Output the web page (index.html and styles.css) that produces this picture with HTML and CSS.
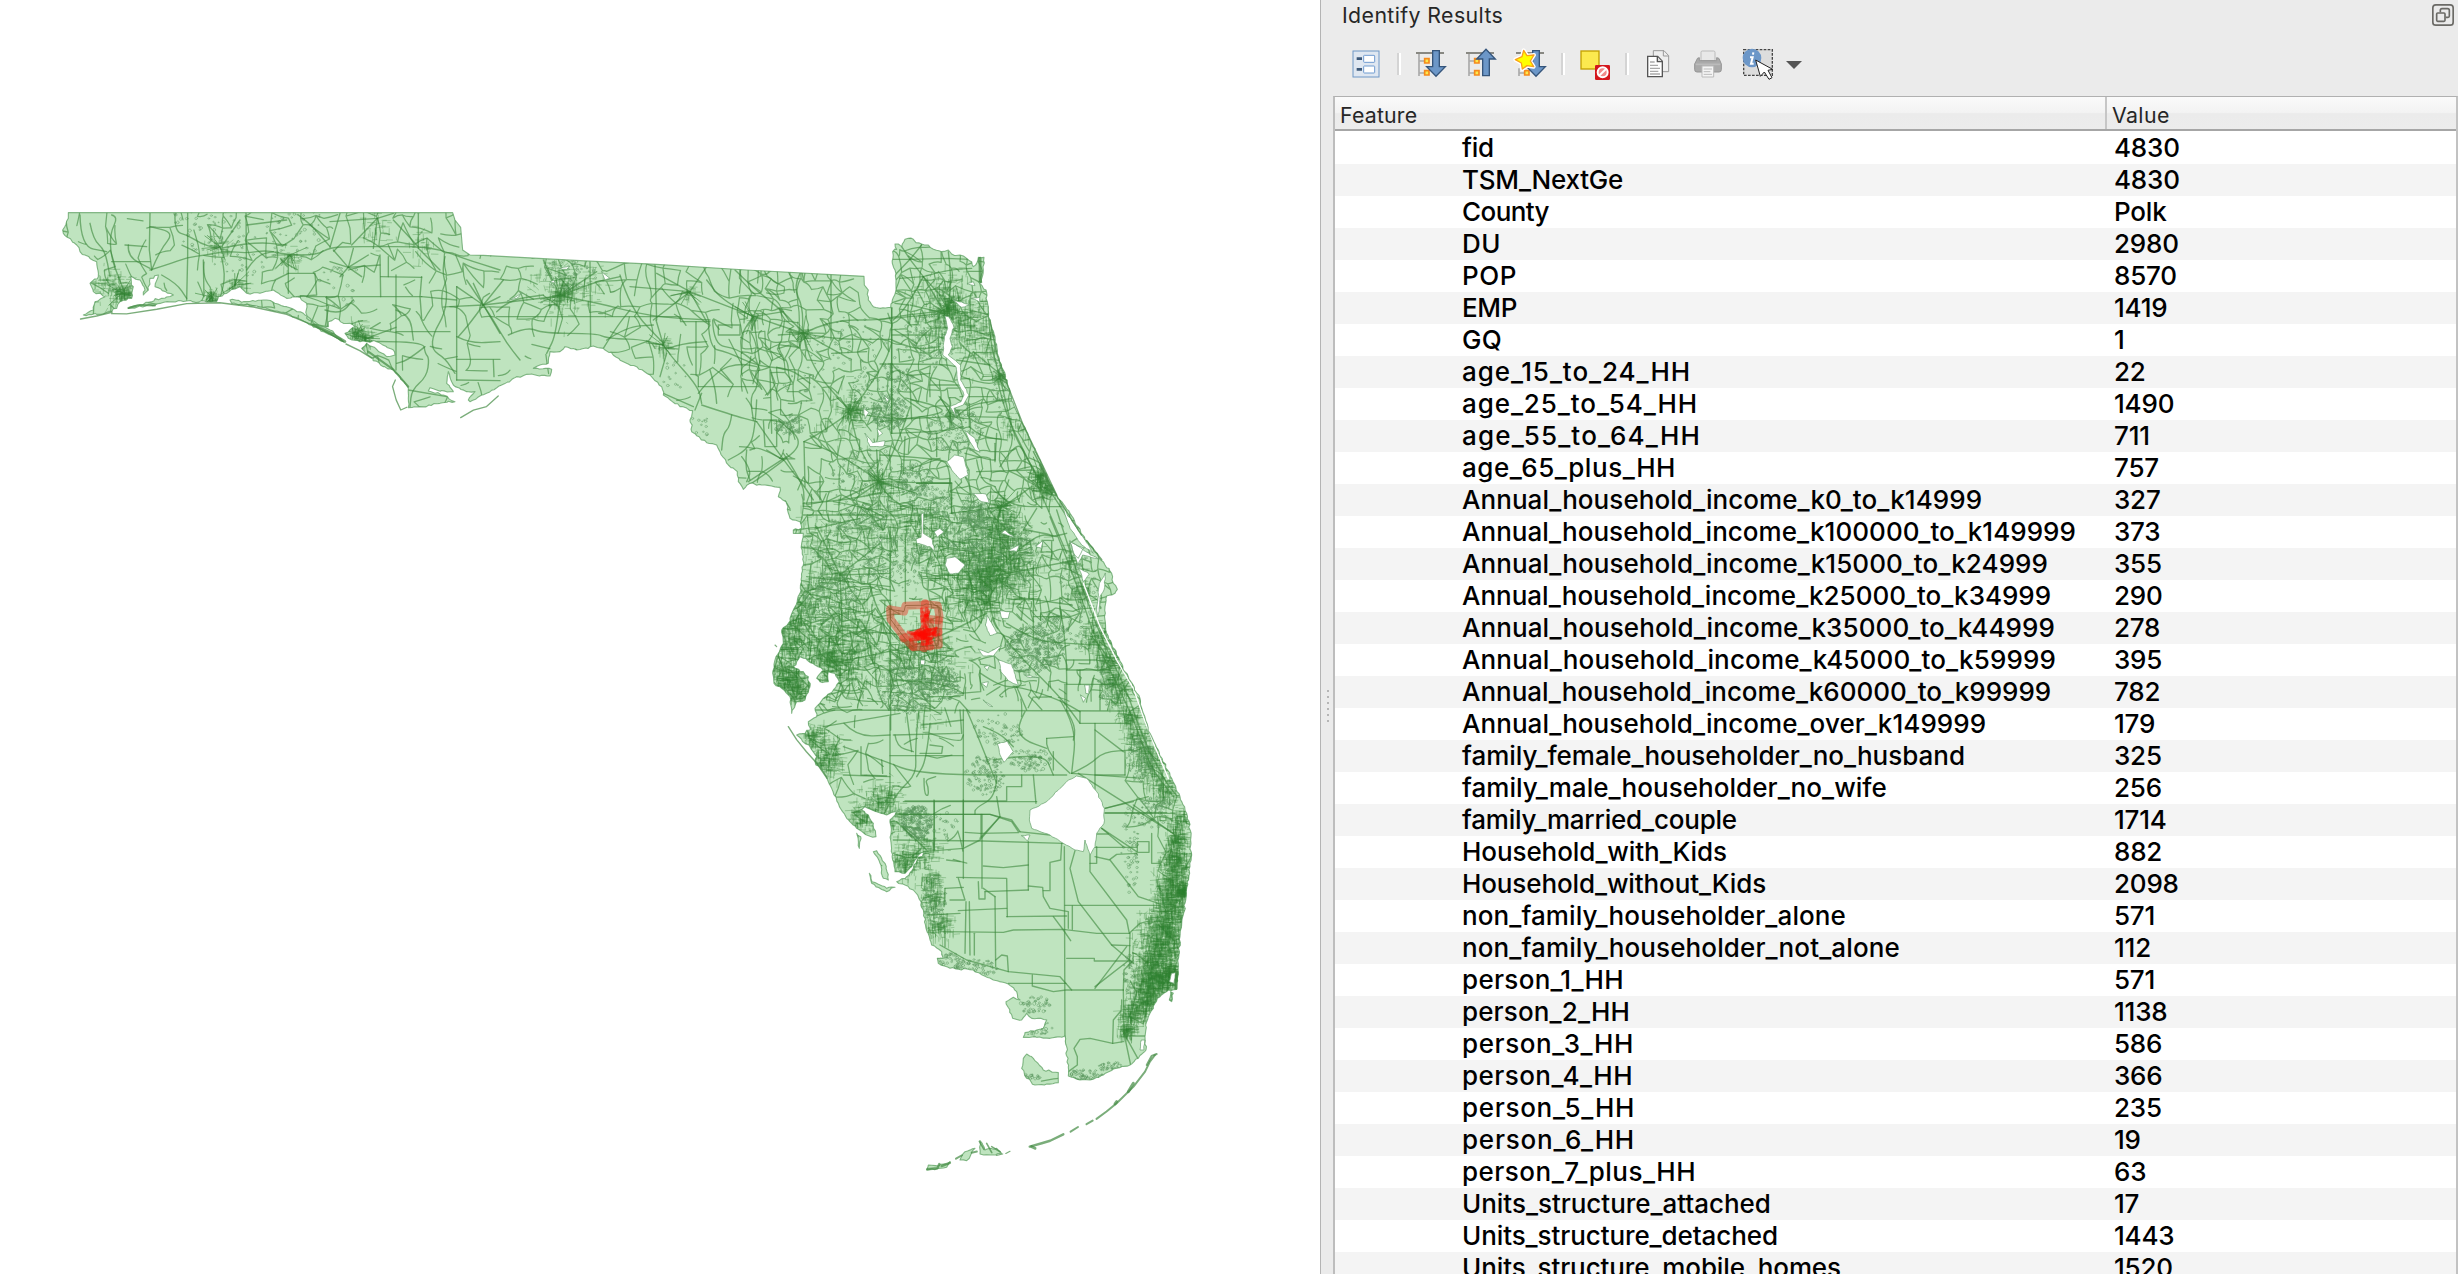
FILE: index.html
```
<!DOCTYPE html>
<html lang="en">
<head>
<meta charset="utf-8">
<title>Identify Results</title>
<link rel="stylesheet" href="styles.css">
</head>
<body>
<main class="app">
  <section class="map"><canvas id="map" width="1320" height="1274"></canvas></section>
  <aside class="dock">
    <div class="splitter"><i></i><i></i><i></i><i></i><i></i><i></i></div>
    <div class="panel">
      <header class="title"><span class="title-text">Identify Results</span>
        <svg class="float" width="22" height="22" viewBox="0 0 66 66" fill="none" stroke="#6b6a66" stroke-width="5"><rect x="2.500" y="2.500" width="61" height="61" rx="9"/><rect x="14" y="27" width="25" height="25" rx="3"/><path d="M25 25V19Q25 14 30 14H47Q52 14 52 19V36Q52 40 48 40H41"/></svg>
      </header>
      <div class="toolbar">
        <svg class="i1" width="30" height="32" viewBox="30 24 90 96"><rect x="39" y="33" width="78" height="78" fill="#dfe7f1" stroke="#6f97c6" stroke-width="3"/><g fill="#fff" stroke="#6f9bd0" stroke-width="3"><rect x="71" y="46" width="33" height="21" rx="2"/><rect x="71" y="78" width="33" height="21" rx="2"/></g><path d="M50 56h16M50 88h16" stroke="#3c5878" stroke-width="8"/></svg>
        <span class="sep s1"></span>
        <svg class="i2" width="32" height="32" viewBox="225 24 96 96"><path d="M228 39h84" stroke="#888882" stroke-width="6"/><path d="M237 42v66M237 63h15M237 99h15" stroke="#aaa" stroke-width="5" fill="none"/><path d="M254 56h13v13h-13zM254 92h13v13h-13z" fill="#fce94f" stroke="#f58a1c" stroke-width="5"/><path d="M278 32h20v48h18l-28 29-28-29h18z" fill="#6c97c8" stroke="#35557b" stroke-width="4"/></svg>
        <svg class="i3" width="32" height="32" viewBox="375 24 96 96"><path d="M378 39h84" stroke="#888882" stroke-width="6"/><path d="M387 42v66M387 63h15M387 99h15" stroke="#aaa" stroke-width="5" fill="none"/><path d="M404 56h13v13h-13zM404 92h13v13h-13z" fill="#fce94f" stroke="#f58a1c" stroke-width="5"/><path d="M428 107h20V57h18l-28-29-28 29h18z" fill="#6c97c8" stroke="#35557b" stroke-width="4"/></svg>
        <svg class="i4" width="34" height="32" viewBox="519 24 102 96"><path d="M528 39h84" stroke="#888882" stroke-width="6"/><path d="M537 85v23M537 99h15" stroke="#aaa" stroke-width="5"/><path d="M554 92h13v13h-13z" fill="#fce94f" stroke="#f58a1c" stroke-width="5"/><path d="M578 32h20v48h18l-28 29-28-29h18z" fill="#6c97c8" stroke="#35557b" stroke-width="4"/><path d="M551 31l10 16 21-2-11 18 10 17-20-3-14 10-3-18-18-10 20-9z" fill="#fff" stroke="#fff" stroke-width="12" stroke-linejoin="round"/><path d="M551 31l10 16 21-2-11 18 10 17-20-3-14 10-3-18-18-10 20-9z" fill="#ff0" stroke="#f9a11b" stroke-width="4" stroke-linejoin="round"/></svg>
        <span class="sep s2"></span>
        <svg class="i5" width="32" height="32" viewBox="57 24 96 96"><rect x="63" y="33" width="54" height="54" fill="#fce94f" stroke="#c4a000" stroke-width="4"/><rect x="105" y="75" width="45" height="45" rx="4" fill="#d4161c"/><circle cx="128" cy="97" r="15" fill="#f08a8a" stroke="#fff" stroke-width="6"/><path d="M138 87L117 107" stroke="#fff" stroke-width="6"/></svg>
        <span class="sep s3"></span>
        <svg class="i6" width="24" height="32" viewBox="258 24 72 96"><path d="M280 32h32l14 15v48h-46z" fill="#eee" stroke="#999" stroke-width="3"/><path d="M310 32v16h16" fill="none" stroke="#999" stroke-width="3"/><path d="M263 49h30l14 15v46h-44z" fill="#fff" stroke="#555" stroke-width="4"/><path d="M292 50v15h15" fill="#ddd" stroke="#555" stroke-width="4"/><path d="M270 66h14M270 76h24M270 85h30M270 94h25M270 102h30" stroke="#aaa" stroke-width="4"/></svg>
        <svg class="i7" width="30" height="32" viewBox="399 24 90 96"><rect x="423" y="33" width="42" height="30" rx="4" fill="#e8e8e8" stroke="#bbb" stroke-width="3"/><path d="M410 60q1-7 8-7v9h52v-9q8 0 9 7l5 12v17q0 7-7 7h-66q-7 0-7-7V72z" fill="#aaa" stroke="#959595" stroke-width="3"/><path d="M407 73h74" stroke="#bbb" stroke-width="5"/><path d="M426 78h35v33h-35z" fill="#f4f4f4" stroke="#bbb" stroke-width="3"/><path d="M431 87h25M431 95h20M431 103h25" stroke="#bbb" stroke-width="3"/></svg>
        <svg class="i8" width="34" height="32" viewBox="543 24 102 96"><path d="M551 29h86v77h-86z" fill="#ddd" stroke="#444" stroke-width="4" stroke-dasharray="8 4"/><circle cx="576" cy="54" r="28" fill="#6c97c8"/><path d="M580 37l-1 7M570 52h8l-5 19h8" stroke="#fff" stroke-width="6" fill="none"/><path d="M587 60l14 49 12-13 14 22 9-5-12-22 14-3z" fill="#fff" stroke="#222" stroke-width="3"/></svg>
        <svg class="i9" width="18" height="32" viewBox="675 24 54 96"><path d="M678 63h48l-24 24z" fill="#555"/></svg>
      </div>
      <div class="table">
        <div class="thead"><span class="c1">Feature</span><span class="c2">Value</span></div>
        <div class="tbody" id="rows"></div>
      </div>
    </div>
  </aside>
</main>
<script src="app.js"></script>
</body>
</html>
```
FILE: styles.css
```
body{margin:0;overflow:hidden;background:#fff;font-family:Inter,"Liberation Sans",sans-serif}
.app{display:flex;width:2458px;height:1274px;overflow:hidden}
.map{width:1320px;flex:none}
.map canvas{display:block}
.dock{flex:1;display:flex;background:#ebebeb;border-left:1px solid #b4b4b4;box-sizing:border-box}
.splitter{width:12px;flex:none;display:flex;flex-direction:column;gap:4px;padding:690px 0 0 6px;box-sizing:border-box}
.splitter i{width:2px;height:2px;background:#b5b5b5;flex:none}
.panel{flex:1;display:flex;flex-direction:column;min-width:0}
.title{height:48px;display:flex;justify-content:space-between;padding:0 4px 0 9px;font-size:21.3px;line-height:30px;color:#262626}
.title-text{letter-spacing:.4px}
.float{margin-top:4px}
.toolbar{height:48px;display:flex;align-items:flex-start}
.toolbar svg{flex:none}
.sep{width:2px;height:22px;margin-top:5px;background:#d4d4d4;border-right:2px solid #fff;flex:none}
.i1{margin-left:17px}.s1{margin-left:17px}.i2{margin-left:14px}.i3{margin-left:18px}.i4{margin-left:16px}
.s2{margin-left:14px}.i5{margin-left:14px}.s3{margin-left:14px}.i6{margin-left:17px}.i7{margin-left:23px}.i8{margin-left:18px}.i9{margin-left:10px}
.table{flex:1;border-left:2px solid #bdbdbd;border-top:1px solid #b0b0b0;border-right:2px solid #c2c2c2;background:#fff;display:flex;flex-direction:column;overflow:hidden}
.thead{height:34px;box-sizing:border-box;border-bottom:2px solid #a6a6a6;display:grid;grid-template-columns:772px 1fr;line-height:36px;font-size:21.3px;color:#262626;background:linear-gradient(#fafafa 0,#f3f3f3 48%,#ebebeb 52%,#ececec)}
.thead span{height:32px}
.thead .c1{padding-left:5px;border-right:2px solid #c6c6c6;letter-spacing:.2px}
.thead .c2{padding-left:5px;letter-spacing:.4px}
.row{height:32px;display:grid;grid-template-columns:779px 1fr;font-size:26px;line-height:31px;color:#000;white-space:nowrap;font-weight:500}
.value{letter-spacing:-.2px}
.row:nth-child(even){background:#f4f4f4}
.name{padding-left:127px}
.tbody{padding-top:1px}
```
FILE: app.js
```
// Attribute table: field, value, rendered field width
const fields = [
["fid",4830,30],["TSM_NextGe",4830,159],["County","Polk",85],["DU",2980,37],["POP",8570,53],["EMP",1419,53],["GQ",1,38],
["age_15_to_24_HH",22,227],["age_25_to_54_HH",1490,234],["age_55_to_64_HH",711,237],["age_65_plus_HH",757,212],
["Annual_household_income_k0_to_k14999",327,518],["Annual_household_income_k100000_to_k149999",373,612],
["Annual_household_income_k15000_to_k24999",355,584],["Annual_household_income_k25000_to_k34999",290,587],
["Annual_household_income_k35000_to_k44999",278,591],["Annual_household_income_k45000_to_k59999",395,592],
["Annual_household_income_k60000_to_k99999",782,587],["Annual_household_income_over_k149999",179,522],
["family_female_householder_no_husband",325,501],["family_male_householder_no_wife",256,423],["family_married_couple",1714,273],
["Household_with_Kids",882,263],["Household_without_Kids",2098,302],["non_family_householder_alone",571,382],
["non_family_householder_not_alone",112,436],["person_1_HH",571,160],["person_2_HH",1138,166],["person_3_HH",586,170],
["person_4_HH",366,169],["person_5_HH",235,171],["person_6_HH",19,171],["person_7_plus_HH",63,232],
["Units_structure_attached",17,307],["Units_structure_detached",1443,314],["Units_structure_mobile_homes",1520,377]];
const tbody = document.getElementById("rows");
for (const [name, value, width] of fields) {
  const row = document.createElement("div"); row.className = "row";
  const a = document.createElement("span"), t = document.createElement("span"), b = document.createElement("span");
  a.className = "name"; b.className = "value"; t.textContent = name; b.textContent = value;
  a.append(t); row.append(a, b); tbody.append(row);
  t.style.letterSpacing = ((width + 2 - t.getBoundingClientRect().width) / name.length).toFixed(2) + "px";
}

// Map. Every sheet has its own origin; sheet units are a third of a pixel.
const sheets = {A:[40,190],B:[450,220],C:[880,220],D:[700,450],E:[850,800]};
const pts = s => { const out=[]; let o=[0,0];
  for (const w of s.trim().split(/\s+/)) { if (sheets[w]) o=sheets[w]; else { const [x,y]=w.split(",").map(Number); out.push([o[0]+x/3,o[1]+y/3]); } }
  return out; };
const c = document.getElementById("map").getContext("2d");
let seed = 7; const rnd = () => { seed=(seed*1664525+1013904223)>>>0; return seed/4294967296; };
const gauss = () => (rnd()+rnd()+rnd()-1.5)/0.75;
const rough = (p, amp, closed=true) => { const out=[]; for (let i=0;i<p.length-(closed?0:1);i++){ const a=p[i], b=p[(i+1)%p.length]; const d=Math.hypot(b[0]-a[0],b[1]-a[1]); const n=Math.max(1,Math.round(d/3)); for(let k=0;k<n;k++) out.push([a[0]+(b[0]-a[0])*k/n+(k?gauss()*amp:0),a[1]+(b[1]-a[1])*k/n+(k?gauss()*amp:0)]);} return out; };
const poly = (p, close=true) => { c.moveTo(...p[0]); for (const q of p.slice(1)) c.lineTo(...q); if (close) c.closePath(); };
const north = pts(`A 85,68 1238,68 1245,90 1262,112 1268,180 1290,195 B 100,106 390,122 620,133 890,150 1242,169`);
const coast = pts(`B 1243,195 1255,210 1255,240 1270,260 1290,265 1322,262
C 37,240 48,210 48,180 45,150 37,130 38,95 50,88 45,72 55,72 65,80 75,58 85,55 100,58 108,68 125,72 145,75 155,85 185,95 205,90 215,102 240,105 260,115 275,125 280,140 290,130 295,112 312,112 310,150 305,188 295,185 318,210 322,245 325,270 330,300 345,350 352,400 370,450 382,490 400,550 430,615 450,660 480,720 510,790 530,825 570,880 608,945 640,985 662,1020
D 1215,345 1235,370 1240,400 1252,418 1245,430 1220,438 1215,470 1215,510 1220,550 1250,615 1285,680 1320,745 1330,790 1350,850 1375,900 1415,985 1440,1040 1460,1090 1473,1160
E 1020,200 1005,310 990,410 985,500 980,568 955,570 930,590 915,610 900,640 890,665 885,710 888,750 865,775 840,795 800,805 760,825 720,840 690,840 655,828 650,740 645,708 600,715 560,712 520,712 525,698 560,690 580,685 590,660 545,655 530,640 515,660 488,655 468,605 490,592 510,600 500,575 475,552 430,540 370,510 300,505 265,490 262,475 280,475 275,455 245,435 238,410 228,385 220,330 205,290 190,270 165,255 140,245 170,230 190,205 205,172 230,155 205,165 185,200 165,220 135,215 128,180 122,120 120,60 135,45
D 600,1078 560,1095 530,1085 495,1070 485,1080 505,1095 520,1120 528,1160 500,1155 470,1135 440,1105 415,1060 395,1015 370,965 345,935 350,920 330,890 290,855 330,840 325,815 350,800 345,775 370,745 400,720 418,695 405,670 385,665 385,695 360,695 350,685 370,660 345,645 300,620 290,635 280,650 310,665 325,680 330,710 315,750 290,755 275,790 270,740 245,715 222,700 218,670 228,620 250,580 245,540 265,520 285,470 300,430 305,380 310,320 305,280 310,250 280,250 280,240 305,235 300,215 270,205 262,178 258,155 235,140 240,112 150,100 130,118 115,95 112,65 85,45 60,5
B 800,675 770,668 725,635 720,600 728,572 690,560 640,525 635,500 600,465 560,440 520,425 460,385 430,378 380,390 345,380 330,395 300,395 295,430 270,435 250,445 305,448 300,468 230,463 200,470 155,495 110,520 60,545 55,540 75,515 50,515 10,495
A 1225,545 1220,580 1240,605 1190,600 1170,593 1165,603 1210,615 1245,635 1200,640 1140,650 1105,653 1105,595 1080,560 1060,540 1030,530 990,500 965,475 980,460 1010,478 1040,500 1065,495 1060,480 1010,455 980,455 960,455 925,445 915,430 945,410 930,400 910,400 885,385 865,395 865,410 830,405 800,385 800,340 770,320 740,325 700,300 660,310 620,310 600,290 560,310 535,320 530,335 440,333 380,335 345,345 265,355 300,345 365,325 400,315 345,290 355,255 330,265 325,300 310,315 312,290 300,270 270,260 280,290 275,325 240,335 230,355 190,372 130,375 160,360 165,335 195,320 160,305 150,280 175,260 170,215 120,185 110,165 70,130 68,120 85,85`);
const land = [...north, ...rough(coast, .8, false), coast[coast.length-1]];
const isles = [`A 570,330 620,335 680,330 740,350 790,370 830,400 870,420 910,455 860,430 800,398 740,370 650,348 575,340`,
`E 530,762 550,775 580,810 625,818 625,848 590,852 555,855 530,835 515,805 520,775`,`E 70,155 80,152 95,175 105,190 115,240 100,235 90,190`,
`E 58,220 66,245 110,265 135,262 110,275 65,250`,`E 230,1110 235,1095 265,1098 300,1085 290,1102`,`E 330,1080 345,1055 375,1045 360,1070 350,1082`,`E 390,1022 405,1050 440,1045 455,1060 430,1065 390,1062`,`D 470,1150 482,1160 478,1195`,`E 962,575 970,580 965,605 958,600`].map(s=>rough(pts(s),.7));
const lakes = [`D 1130,978 1160,985 1190,1025 1213,1075 1212,1120 1190,1150 1185,1190 1170,1215 1155,1170 1150,1205 1125,1200 1090,1180 1050,1155 995,1135 988,1110 990,1080 1040,1055 1080,1015 1105,990`,
`D 740,325 765,320 795,345 775,370 750,372 735,345`,`D 765,15 790,20 805,75 780,88 755,60 740,35`,`D 665,190 671,190 670,250 695,265 705,305 690,290 650,280 648,268 663,262`,`D 703,245 720,235 732,245 712,262`,
`C 195,288 206,290 222,322 210,355 217,380 205,405 242,435 242,480 267,525 250,555 222,565 228,590 210,560 243,545 252,525 235,490 228,440 188,405 193,350 203,325`,`C 255,632 285,655 300,697 285,690 265,655`,`C 278,820 318,822 328,850 305,845`,
`C 220,240 270,255 245,262`,`C 262,190 280,185 285,197`,`C 275,235 300,232 300,247`,`D 895,630 935,642 955,707 925,692 903,665`,`D 862,497 892,550 870,557 856,525`,`D 835,597 865,608 905,588 880,618 850,618`,`D 900,482 930,485 925,505 905,505`,
`D 893,882 922,873 940,905 912,937 900,915`,`D 905,250 915,240 943,262`,`D 925,300 958,285 950,305`,`D 1008,290 1027,272 1025,295`,`D 1155,705 1168,705 1167,732 1157,730`,`D 1142,735 1157,745 1150,757`,`D 850,750 878,770 868,768`,`D 853,650 870,645 862,662`,`D 845,700 865,695 860,712`,`D 975,675 1015,683 990,683`,
`D 662,630 675,630 673,645 663,643`,`B 455,155 480,175 465,180`,`B 330,145 360,138 350,148`,`B 300,185 312,180 315,190`,`B 1245,640 1268,668 1305,662 1300,680 1260,680`,`B 1282,625 1298,640 1285,650`,`B 1240,565 1257,577 1245,597`,`B 1302,525 1318,540 1310,545`,`B 172,243 218,220 200,235`,`E 515,107 540,105 533,123`,
`D 1110,272 1150,300 1195,327 1148,315 1130,350 1168,372 1150,395`,`D 1216,370 1212,420 1200,440 1195,500 1190,480 1198,400`,`C 545,850 560,880 605,945 640,1000 605,975 570,925`,`C 570,965 610,985 595,1015 580,1000`,`E 965,520 978,518 972,550 958,545`,`E 875,720 885,720 882,750 870,750`,`D 530,255 545,270 545,280`].map(s=>rough(pts(s),.4));
const shape = () => { c.beginPath(); poly(land); isles.forEach(p=>poly(p)); };
const LINE = "rgba(58,135,58,.6)";
c.lineJoin = "round"; c.lineCap = "round";
c.save(); shape(); c.fillStyle = "#bfe4bf"; c.fill(); c.clip();

// Rural road mesh
const sparse = [[960,700,1125,1060,.0],[890,750,960,800,.2],[640,380,770,440,.12],[40,190,240,300,.4],[380,320,600,420,.22],[600,320,740,380,.25],[700,430,800,510,.25],[890,900,1110,1080,0],[1060,830,1155,900,0],[1125,895,1150,935,0],[945,620,1090,700,.3],[870,715,960,890,.2],[440,350,520,380,.1],[900,480,950,510,.3],[905,600,925,640,.1],[895,540,915,600,.1],[885,585,925,630,.06],[1000,500,1060,540,.3],[850,220,890,330,.25],[240,250,420,300,.35]];
const density = (x,y) => { for (const r of sparse) if (x>r[0]&&y>r[1]&&x<r[2]&&y<r[3]) return r[4]; return x<760 ? .72 : y<700 ? .85 : .6; };
const mesh = (x0,y0,x1,y1,s,k) => { const g=[]; for(let y=y0;y<y1;y+=s){const r=[];for(let x=x0;x<x1;x+=s) r.push([x+gauss()*s*.36,y+gauss()*s*.36]); g.push(r);}
  const link=(a,b)=>{ if (rnd()>density(a[0],a[1])*k) return; c.moveTo(...a); c.quadraticCurveTo((a[0]+b[0])/2+gauss()*2,(a[1]+b[1])/2+gauss()*2,...b); };
  for(let j=0;j<g.length;j++) for(let i=0;i<g[j].length;i++){ if(g[j][i+1]) link(g[j][i],g[j][i+1]); if(g[j+1]) link(g[j][i],g[j+1][i]); if(g[j+1]&&g[j+1][i+1]&&rnd()<.25) link(g[j][i],g[j+1][i+1]); } };
c.strokeStyle = LINE; c.lineWidth = 1.25;
c.beginPath(); mesh(40,190,800,450,13,.72); c.stroke();
c.beginPath(); mesh(740,220,1210,720,10,.85); c.stroke();
c.beginPath(); mesh(740,480,1050,720,12,.35); c.stroke();
c.beginPath(); mesh(740,600,1210,1080,14,.7); c.stroke();

// Towns: small street grids with radial approaches  [x, y, radius, streets]
const towns = [[122,293,8,110],[108,285,14,70],[220,247,9,40],[212,297,5,60],[235,285,7,40],[290,255,9,30],[357,333,9,90],[365,338,6,40],[560,295,8,70],[565,285,26,180],[420,245,12,30],[375,230,15,30],[663,345,6,30],[803,333,6,35],[753,317,4,18],[688,292,6,12],[851,411,8,70],[845,410,20,70],[878,481,7,50],[885,485,20,90],[947,308,8,100],[945,302,24,220],[968,322,20,190],[935,330,18,90],[980,350,18,60],[1000,376,5,40],[950,413,5,25],[1040,477,8,110],[1045,488,9,80],[1015,425,12,50],[1001,506,7,60],[1005,520,17,120],
[988,575,12,140],[988,565,34,520],[975,598,18,170],[1010,562,24,240],[1003,535,11,90],[970,572,30,220],[828,658,9,80],[825,648,26,360],[790,645,12,140],[788,678,14,270],[798,692,10,110],[845,665,20,120],[812,735,10,110],[825,762,13,170],[830,748,12,60],[880,800,15,200],[862,818,12,110],[905,862,12,170],[922,850,14,110],[898,822,12,60],[932,900,9,90],[938,925,10,120],[930,880,8,70],[905,650,10,60],[920,640,34,140],[870,650,34,180],[935,662,22,80],[800,600,20,160],[830,590,34,200],[840,575,7,30],[790,625,12,120],[820,540,24,110],[870,530,28,150],[925,545,26,140],[910,520,18,80],[930,520,20,100],
[1080,590,9,80],[1095,635,12,130],[1105,660,11,90],[1112,680,10,80],[1118,695,10,80],[1128,715,8,90],[1135,735,12,110],[1145,755,12,120],[1155,772,12,90],[1165,790,11,110],[1070,560,9,60],[985,530,24,130],[950,560,24,140],[850,620,26,130],[925,720,14,30],
[1177,840,9,150],[1175,860,11,220],[1173,880,13,250],[1171,900,14,300],[1165,925,17,420],[1160,950,19,500],[1155,975,17,500],[1172,975,9,220],[1148,992,14,270],[1140,1005,12,150],[1130,1015,9,110],[1126,1031,5,90],[1183,890,5,130],[1178,820,8,90]];
c.strokeStyle = "rgba(52,132,54,.32)"; c.lineWidth = 1;
for (const [x,y,r,n] of towns) { c.beginPath(); for (let i=0;i<n;i++) { const px=x+gauss()*r, py=y+gauss()*r, l=2+rnd()*7; c.moveTo(px,py); if (rnd()<.45) c.lineTo(px+l,py+gauss()*.4); else if (rnd()<.85) c.lineTo(px+gauss()*.4,py+l); else c.lineTo(px+gauss()*5,py+gauss()*5); } c.stroke(); }
c.strokeStyle = LINE; c.beginPath();
for (const [x,y,r,n] of towns) if (r<=9 && y<560) for (let i=0;i<8;i++) { const a=rnd()*6.28,l=8+rnd()*13; c.moveTo(x,y); c.lineTo(x+Math.cos(a)*l,y+Math.sin(a)*l); }
c.stroke();
// Built-up cores: separate strokes, so overlaps darken
c.strokeStyle = "rgba(48,130,50,.26)"; c.lineWidth = 1.2;
for (const [x,y,r,n] of towns) for (let i=0;i<n*.4;i++) { const px=x+gauss()*r*.75, py=y+gauss()*r*.75, l=2+rnd()*5; c.beginPath(); c.moveTo(px,py); rnd()<.5?c.lineTo(px+l,py):c.lineTo(px,py+l); c.stroke(); }

// Ponds: pale grey-green specks  [x, y, rx, ry, count]
const ponds = [[210,225,35,25,60],[240,255,25,20,25],[290,230,30,30,60],[340,285,20,20,22],[570,275,25,15,70],[675,375,12,15,14],[700,430,15,12,14],[790,425,14,9,80],[890,412,16,16,200],[880,390,25,25,80],[900,380,12,12,40],[870,480,35,30,110],[915,480,16,14,120],[955,430,25,22,130],[975,510,14,14,120],[930,500,20,14,100],[900,560,30,25,160],[860,520,25,12,100],[830,600,26,25,140],[1000,555,35,35,300],[965,530,25,20,140],[1030,650,22,22,290],[1050,640,14,25,150],[905,690,24,22,250],[945,685,14,14,130],[925,670,25,25,120],[1000,730,24,15,70],[985,775,18,18,130],[1025,760,15,10,60],[917,822,14,15,260],[1040,760,10,10,25],[945,825,12,12,20],[1080,600,20,45,100],[1110,680,12,25,60],[1140,760,12,20,110],[1155,805,14,7,40],[975,968,20,8,80],[1085,1075,16,5,60],[1115,1068,16,5,50],[1035,1005,14,8,50],[950,960,14,6,40],[1038,1028,14,8,30],[1030,1078,10,4,20],[935,900,10,25,70],[1130,850,8,40,60],[1150,815,15,12,30],[845,560,30,30,110],[1130,975,6,20,30],[800,385,15,20,15],[855,350,40,30,50],[930,340,25,25,90],[1000,370,8,40,60]];
c.strokeStyle = "rgba(95,155,100,.5)"; c.lineWidth = .9;
c.beginPath();
for (const [x,y,rx,ry,n] of ponds) for (let i=0;i<n;i++) { const a=rnd()*6.283, q=Math.sqrt(rnd())*1.12, px=x+Math.cos(a)*q*rx, py=y+Math.sin(a)*q*ry, r=.5+rnd()*1.1; c.moveTo(px+r,py); c.ellipse(px,py,r,r*(.6+rnd()*.6),0,0,6.3); }
c.stroke();

// Named highways and section roads
const roads = `A 443,68 443,200 440,330|A 618,68 620,305|A 405,70 403,125 443,135 480,160 530,175|A 330,240 380,225 443,202 500,195 560,183 620,190 680,180 740,195 830,195 870,172 935,170 1000,170 1130,170 1200,178 1270,205 1380,240|A 335,240 360,180 403,128 330,110|A 215,75 235,80 210,130 213,200 235,260 255,310|A 120,75 122,170 200,185|A 150,100 160,150 195,180 210,260|A 330,70 328,180 335,240|A 255,165 320,170|A 265,165 262,200 330,235|A 365,255 410,280 440,325|A 330,215 215,215|A 490,210 492,320|A 545,205 558,255 540,325|A 620,240 650,195 700,185|A 745,195 745,310|A 705,270 745,250|A 745,250 825,250 830,315 770,320|A 800,320 1020,320 1145,320|A 860,320 862,410|A 855,360 900,375 940,330|A 1068,255 1068,540|A 1020,195 1022,320|A 1145,260 1140,320 1145,385|A 1022,260 1145,262|A 1045,200 1045,260|A 1068,360 1110,375 1120,450|A 1068,425 1230,425|A 980,445 1068,412|A 975,455 1150,452 1155,490 1168,505 1160,560 1115,600 1110,650|A 1155,470 1105,510 1070,520|A 925,232 870,215|A 925,232 880,180|A 925,232 940,175|A 925,232 1020,225|A 925,232 965,260|A 925,232 900,260|A 925,232 985,195|A 1250,290 1250,570|A 1250,508 1380,508|A 1250,570 1380,572|A 1250,440 1290,460 1380,455|A 1330,345 1290,400 1255,440|A 1330,345 1380,430|A 1330,345 1250,290|A 1330,345 1300,280|A 1330,345 1380,320|A 1360,510 1362,560|A 1145,320 1250,330|A 1215,200 1205,240 1222,300 1215,370 1180,430 1175,480 1215,505 1245,550|A 1135,175 1135,70|A 1135,175 1200,240|A 1135,170 1060,90|A 1012,85 935,165|A 1012,85 1060,70|A 1012,85 870,95|A 1012,85 1000,175|A 870,170 820,110 775,75|A 870,172 900,70|A 540,175 640,155 740,165|A 545,170 600,90|A 620,105 740,90|A 1105,600 1220,620
B 0,260 100,255|B 100,255 50,180|B 100,255 330,228|B 100,255 160,180|B 100,255 130,300 170,370 210,420|B 330,228 280,120|B 330,228 420,190 510,170|B 330,228 430,245 600,290 780,300|B 330,228 320,340 290,400|B 330,228 440,155|B 420,125 422,380|B 140,290 690,290 692,305 780,305|B 140,275 175,240 280,225|B 175,345 230,320 280,340 440,340 470,355 600,360 615,385|B 460,385 500,320 540,270|B 470,360 530,320 610,315|B 510,165 540,265 640,370|B 618,300 640,375|B 615,135 620,300|B 640,375 655,400 745,500 755,550|B 650,400 630,470|B 655,385 700,370 770,365|B 738,305 738,465 745,470 745,500|B 745,500 925,500|B 720,215 770,305|B 720,215 620,160|B 720,215 770,140|B 720,215 910,290 1060,340|B 720,215 610,300|B 720,215 540,200|B 775,305 778,385 830,395 925,440 1020,445 1080,490|B 788,300 790,375 860,385 920,430|B 910,290 820,245 770,180|B 910,290 930,430|B 910,290 870,340 875,400|B 910,290 1000,275|B 805,315 870,315 870,345 805,345 805,315|B 855,150 905,200 1000,275 1060,340 1170,400|B 1060,340 1140,300 1290,300 1330,290 1500,270|B 1060,340 1145,358 1325,358|B 1143,165 1143,360|B 1050,160 1030,200 1058,260 1058,340|B 1060,340 985,345|B 1325,262 1325,640|B 1205,575 1300,440 1325,370|B 1205,575 1290,600 1500,590|B 1205,575 1110,640 1062,665|B 1205,575 1130,500 1080,420 1060,340|B 925,440 925,500 900,530 910,600|B 745,520 800,450 870,430 920,440|B 780,450 795,500 800,550|B 755,555 845,585 920,605|B 735,570 755,520|B 845,585 840,620 820,640 815,690|B 920,540 915,640 890,690 835,720|B 920,605 1000,720 1060,795 1090,840|B 890,800 1000,725 1062,665 985,600|B 1000,720 930,680 900,690|B 890,690 885,740 900,780|B 940,600 980,600 980,680 945,680 940,600|B 960,450 965,640|B 1062,665 1065,800|B 1062,665 1150,690 1290,785|B 1290,785 1230,700 1205,600|B 1290,785 1350,650 1380,560|B 1290,785 1500,790|B 1290,785 1210,840|B 640,520 730,560|B 1145,400 1250,395|B 1380,490 1385,600
C 40,118 90,118|C 90,118 65,80|C 90,118 125,75|C 90,118 130,170|C 90,118 45,165|C 90,118 200,115 270,118|C 130,170 85,255 40,300|C 130,170 60,175|C 130,170 200,150 275,145|C 130,170 185,230|C 195,280 90,255|C 195,280 0,298|C 195,280 130,170|C 205,95 215,180 205,260|C 85,255 80,300 95,320|C 85,255 45,250|C 35,265 35,640|C 0,432 185,432 230,440|C 35,345 150,345|C 35,360 100,390 180,380|C 45,330 110,370|C 170,440 148,470 150,530|C 35,430 60,470 150,460|C 150,495 240,495|C 95,540 150,550 210,580 0,605|C 210,580 180,530|C 268,550 268,620|C 230,590 268,555 330,545 400,535|C 270,590 370,592|C 268,620 300,650 380,660|C 230,420 330,435|C 280,395 370,470|C 270,400 240,480|C 325,260 328,360 360,470 385,580 400,640 455,740|C 350,470 370,560 410,650 470,770|C 245,470 330,500 360,470|C 240,530 340,530|C 35,640 190,635 250,620|C 75,650 70,760|C 0,705 180,715 210,740 215,880|C 95,745 180,715|C 110,790 215,790|C 255,700 330,720 345,720|C 290,720 300,780 345,800|C 290,755 460,750|C 345,670 345,720|C 360,740 405,670 435,690 435,745|C 345,800 370,860 545,860|C 370,860 455,800|C 370,860 210,880|C 345,725 350,640|C 480,770 540,855 600,960|C 470,790 500,860 560,1000|C 470,865 430,930|C 430,930 500,940 520,950 560,940|C 515,965 515,1020|C 170,640 170,710
D 125,20 155,60 140,95|D 145,95 260,20|D 200,0 250,30|D 250,10 310,100 312,150|D 360,80 360,150|D 535,95 530,0|D 535,95 420,150|D 535,95 650,130|D 535,95 580,170 700,180|D 650,100 755,98 755,190|D 310,160 400,155 540,130|D 400,155 490,170 550,200|D 310,195 700,195|D 350,235 480,205|D 570,230 572,780 572,840|D 616,250 616,460|D 420,375 570,370|D 420,375 350,230|D 420,375 540,280|D 420,375 430,610|D 320,380 570,410|D 390,640 600,600 720,560 860,490|D 390,640 400,540 570,550|D 510,400 520,470 620,600 760,620|D 870,380 740,375 670,380|D 870,380 880,260 905,165|D 870,380 1000,250 1070,260|D 870,380 1130,330|D 870,380 860,490 940,600 1080,740 1140,820|D 920,520 1000,570 1090,580 1200,585|D 940,440 1115,465|D 1000,350 1000,570|D 1080,470 1100,580 1100,780|D 1000,500 1080,500|D 1100,630 1190,630|D 1100,660 1230,660|D 1100,703 1265,703|D 1140,660 1140,703|D 1050,200 1090,300 1140,430 1190,580 1250,700 1310,830 1350,950 1420,1040|D 1070,180 1130,370 1210,580 1280,720 1330,870 1400,1000|D 1095,703 1095,765|D 840,660 842,725 780,730|D 842,670 900,710 960,710 1080,750 1140,785|D 900,710 860,735|D 950,710 980,780|D 345,780 1280,783|D 690,780 690,740 780,740|D 570,800 570,1100|D 432,820 470,860 570,855|D 370,830 600,790|D 620,790 635,905|D 655,790 645,900 650,970 600,1020 580,1050|D 690,820 680,930 650,980|D 580,855 780,850|D 585,855 590,890 640,905|D 690,850 780,880 790,855|D 665,825 790,810|D 660,910 725,910 728,890 690,885|D 570,917 790,917|D 483,890 483,975 560,978|D 430,890 545,930 660,975 1100,975|D 545,930 548,970|D 430,975 570,980|D 790,780 790,1190|D 672,985 672,1030 685,1040 685,1010 675,990 707,980|D 615,1053 920,1053 920,1010 965,1010 965,975|D 703,1053 703,1200|D 600,1093 870,1093 935,1110 960,1145|D 890,980 888,1040 825,1075 825,1093|D 890,1040 900,1100 840,1165|D 843,1093 843,1160|D 1000,975 1008,1060|D 975,785 950,830 970,870 1040,895|D 1040,865 1120,860|D 1040,865 1035,900 1110,970|D 1120,870 1130,840 1100,780|D 1080,750 1130,830 1115,970|D 1185,820 1185,1020|D 1140,785 1140,820 1290,820|D 1200,705 1200,780|D 1185,840 1270,905|D 1115,970 1170,945 1210,905 1300,900|D 1115,970 1330,985|D 1135,970 1300,1075 1420,1150|D 1185,975 1275,975|D 1275,905 1275,975|D 850,830 900,850 940,890|D 880,930 1030,905 1060,975|D 1060,905 1060,960|D 1215,1075 1345,1040|D 1215,1088 1400,1088|D 1205,1135 1270,1190|D 800,780 830,850 870,950 890,1000|D 785,850 780,780|D 790,730 740,700 570,690
E 135,43 420,43 485,65 505,95 600,105|E 160,5 560,5|E 252,0 252,150|E 340,0 340,235|E 396,43 396,265|E 450,50 390,120 340,145 220,155|E 130,120 400,123 640,130|E 345,97 390,100 505,98|E 140,65 230,150|E 535,125 535,270|E 400,198 460,203 535,195|E 320,232 470,235 472,350|E 405,275 535,270|E 535,258 578,262 580,290 600,325 655,335 655,385|E 635,130 632,180 600,187 600,272 580,272|E 643,140 645,740|E 470,350 650,348|E 325,332 470,325|E 280,395 460,397 490,390 640,388 740,400 835,400|E 435,290 437,500|E 400,265 435,290|E 385,245 387,297 405,297 405,275|E 325,235 345,300 300,300|E 285,395 285,440|E 358,305 360,465|E 348,305 345,460|E 373,400 373,465|E 270,435 350,480 475,515 630,530 665,570|E 437,480 455,465 472,468 475,515|E 475,550 648,550|E 547,525 547,558 610,575 648,570 820,570|E 645,316 930,316|E 667,318 667,388|E 675,152 660,205 685,305 785,435 850,490|E 735,170 780,180 865,290 925,310|E 720,165 720,215 830,360 838,400|E 735,142 860,142|E 780,178 800,163 860,160|E 765,40 975,40|E 755,85 860,155|E 862,125 897,125 897,157 862,157 862,125|E 740,102 775,102|E 838,400 870,370 900,362|E 840,400 838,480 735,560|E 785,435 840,437|E 650,475 733,475 733,483 840,483|E 735,565 830,440|E 820,570 822,700|E 815,600 815,630 790,660 788,730 820,725|E 788,730 720,715 690,718 672,745 682,770 682,795 655,815|E 820,570 822,510 850,480|E 905,100 905,190 930,190|E 935,48 948,48 948,62 930,62 930,48|E 822,700 842,795|E 822,700 865,778|E 830,708 885,708|E 610,350 640,390 662,422|E 850,15 975,105|E 765,25 850,5|E 740,140 740,190 720,190|E 290,180 330,185|E 285,265 340,262|E 285,265 282,320|E 230,345 330,340`;
// Right-angled section roads keep their corners; the others are smoothed
const square = p => p.slice(1).every((q,i)=>Math.min(Math.abs(q[0]-p[i][0]),Math.abs(q[1]-p[i][1]))<2.5);
c.strokeStyle = LINE; c.lineWidth = 1.4;
for (const chunk of roads.split("\n")) for (const s of chunk.split("|")) { const p=pts(s); c.beginPath(); c.moveTo(...p[0]); if (p[0][1]>780||square(p)) poly(p,false); else { for(let i=1;i<p.length-1;i++) c.quadraticCurveTo(...p[i],(p[i][0]+p[i+1][0])/2,(p[i][1]+p[i+1][1])/2); c.lineTo(...p[p.length-1]); } c.stroke(); }
c.restore();

// Lakes and coast outline
c.beginPath(); lakes.forEach(p=>poly(p)); c.fillStyle="#fff"; c.fill(); c.strokeStyle="rgba(110,165,115,.75)"; c.lineWidth=1; c.stroke();
c.beginPath(); poly(pts("D 1150,400 1200,530 1250,630 1300,715 1330,800 1365,890 1405,985"),false); c.strokeStyle="#fff"; c.lineWidth=1.4; c.stroke();
shape(); c.strokeStyle="rgba(85,155,90,.7)"; c.lineWidth=1.1; c.stroke();
const open = (s,w,col="rgba(70,142,70,.72)") => { const p=pts(s); c.beginPath(); for(let i=0;i<p.length;i++) i?c.lineTo(p[i][0]+gauss()*.2,p[i][1]+gauss()*.2):c.moveTo(...p[i]); c.strokeStyle=col; c.lineWidth=w; c.stroke(); };
for (const [s,w] of [["A 122,387 170,378 215,366",1.6],["A 215,371 260,372 350,358 440,341 540,339 640,350 740,372 830,410 910,455",1.4],["A 265,354 300,345 345,346",2],["A 820,405 870,428 915,455",3],["A 918,462 960,482 995,505",1.4],["A 985,485 1060,540 1105,590",2],["A 1066,570 1058,590 1068,630 1082,660 1100,652",1.3],["A 1262,683 1300,660 1340,650 1375,618",1.3],
["E 915,765 900,785 885,815 850,860 800,910 770,935 740,957",2],["E 920,762 905,768 890,795",2],["E 728,962 710,973",2],["E 684,981 662,995",2],["E 640,1003 600,1022 575,1030 540,1040",2.4],["E 850,850 835,875",3],["E 800,905 795,912",3],["E 480,1054 468,1060",1.2],["E 458,1062 440,1067",1.2],["E 232,1108 262,1104 268,1092",2.5],["E 275,1098 300,1088",2.5],["E 318,1076 335,1066",2],["E 365,1058 380,1055",2],["E 388,1024 402,1048",1.6],["E 410,1030 425,1058",1.6],["E 425,1040 450,1055",1.6],["E 545,1040 555,1045",3],["D 265,830 290,868 320,905 350,940 380,985",1.4],["D 230,590 225,585",1.2],["D 232,625 222,665",1.6],["C 300,115 302,185",3],["C 330,300 350,400 380,490 430,615 480,720 530,825",1.4],["C 480,735 500,775 515,815",2.5],["C 620,962 665,1020",1.5],["D 1000,5 1060,120 1145,255",1.3],["E 980,515 978,565",3]]) open(s,w);

// Selected zones, buffered in red
const sel = ["D 570,478 612,484 616,467 670,465 678,462 713,467 718,500 714,540 716,585 640,592 612,562 572,508 570,478","D 675,460 672,500 678,550 672,595","D 672,505 715,510","D 610,565 650,550 715,545","D 640,590 640,560 690,555 690,515","D 690,590 680,560"];
for (const s of sel) open(s,8,"rgba(232,50,30,.45)");
c.strokeStyle="rgba(255,10,0,.45)"; c.lineWidth=3;
for (let i=0;i<60;i++){ const x=700+(670+gauss()*24)/3,y=450+(556+gauss()*14)/3; c.beginPath(); c.moveTo(x,y); c.lineTo(x+gauss()*4,y+gauss()*2); c.stroke(); }
for (let i=0;i<32;i++){ const x=700+(676+gauss()*8)/3,y=450+(480+rnd()*110)/3; c.beginPath(); c.moveTo(x,y); c.lineTo(x+gauss()*2,y+gauss()*3); c.stroke(); }
open(sel[0],1,"rgba(130,80,40,.6)");
```
